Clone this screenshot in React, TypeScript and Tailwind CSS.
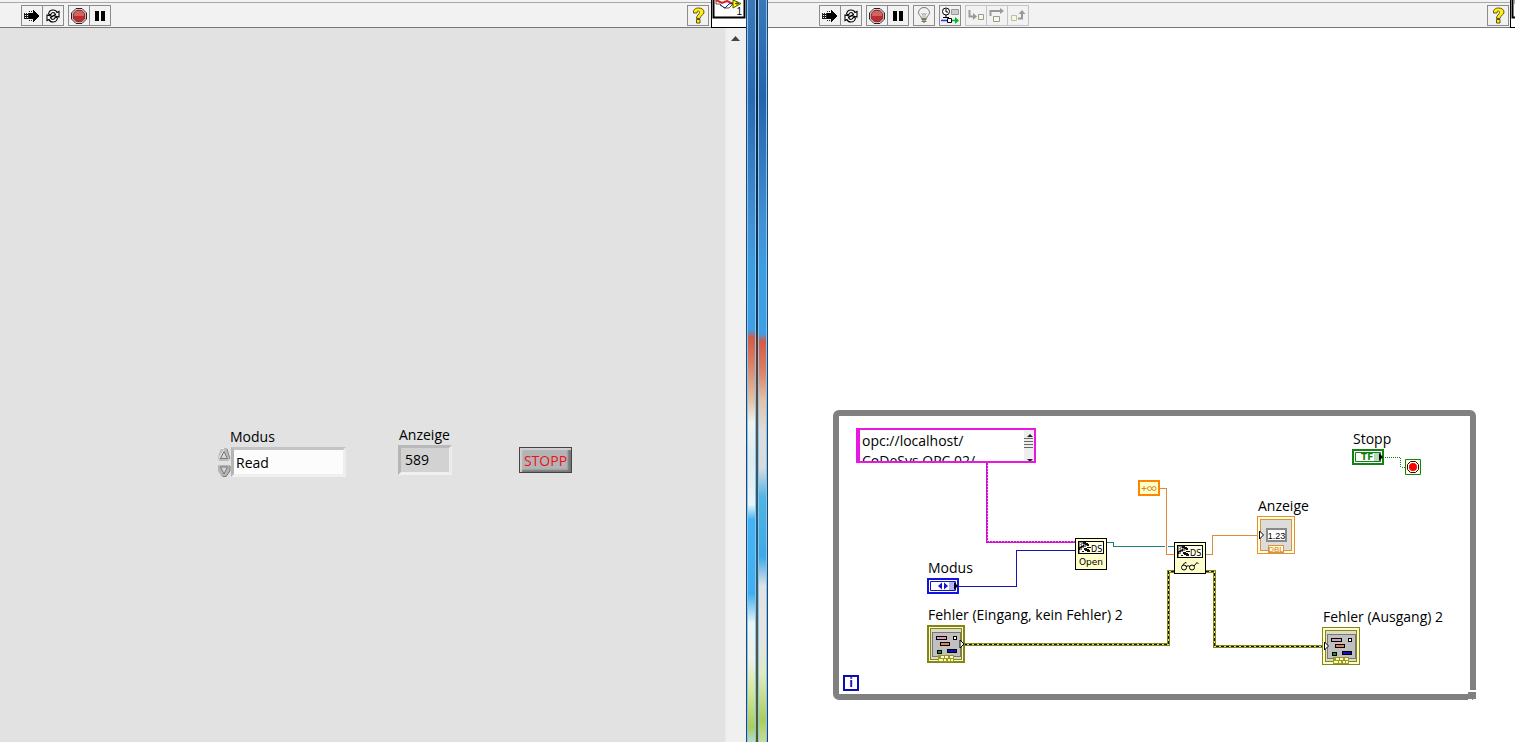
import { useState } from "react";
import type { ReactNode } from "react";

const labelClass = "text-[14px] leading-5 whitespace-nowrap text-black";

function ToolButton({
  title,
  disabled,
  className = "",
  children,
}: {
  title: string;
  disabled?: boolean;
  className?: string;
  children: ReactNode;
}) {
  return (
    <button
      type="button"
      aria-label={title}
      disabled={disabled}
      className={`flex h-[21px] w-[22px] shrink-0 items-center justify-center border bg-[#f2f2f2] ${
        disabled ? "border-[#c4c4c4]" : "border-[#8c8c8c]"
      } ${className}`}
    >
      {children}
    </button>
  );
}

function RunIcon() {
  return (
    <svg width="16" height="14" viewBox="0 0 16 14" shapeRendering="crispEdges">
      <path d="M5 4h4V1h1v1h1v1h1v1h1v1h1v1h1v2h-1v1h-1v1h-1v1h-1v1h-1v1H9v-3H5z" fill="#000" />
      <path d="M0 4h1v6H0zM2 4h1v6H2zM4 4h1v6H4zM5 2h1v1H5zM7 2h1v1H7zM5 11h1v1H5zM7 11h1v1H7z" fill="#222" />
      <path d="M1 5h1M1 7h1M1 9h1M3 5h1M3 7h1M3 9h1" stroke="#000" />
    </svg>
  );
}

function RunContinuousIcon() {
  return (
    <svg width="16" height="14" viewBox="0 0 16 14" fill="#fff" stroke="#000" strokeWidth="1.1">
      <path d="M3.500 5C4 2.500 5.500 1 8 1c2 0 3.500 1 4 2.500L14 2.500V8L8.500 6.500l2-1C10 4 9 3.500 8 3.500 6.500 3.500 6 4.500 5.500 6z" />
      <path d="M12.500 9c-.5 2.500-2 4-4.500 4-2 0-3.500-1-4-2.500L2 11.500V6l5.500 1.500-2 1c.5 1.500 1.500 2 2.500 2 1.500 0 2-1 2.500-2.500z" />
    </svg>
  );
}

function AbortIcon() {
  return (
    <svg width="16" height="16" viewBox="0 0 16 16">
      <path d="M5 .5h6L15.500 5v6L11 15.500H5L.5 11V5z" fill="#fff" stroke="#222" />
      <path d="M5.500 2h5L14 5.500v5L10.500 14h-5L2 10.500v-5z" fill="#b82f2f" stroke="#7d2020" strokeWidth=".7" />
      <path d="M5.500 3h5L13 5.500V8H3V5.500z" fill="#d06464" />
    </svg>
  );
}

function PauseIcon() {
  return (
    <svg width="10" height="10" viewBox="0 0 10 10" shapeRendering="crispEdges">
      <path d="M0 0h4v10H0zM6 0h4v10H6z" fill="#000" />
    </svg>
  );
}

function BulbIcon() {
  return (
    <svg width="14" height="17" viewBox="0 0 14 17" fill="none" stroke="#777">
      <path d="M4.500 11.500C4.500 9 1.500 8.500 1.500 5.500a5.500 5 0 0 1 11 0c0 3-3 3.500-3 6z" fill="#f2f2f0" />
      <path d="M4.500 6l1.200 2L7 6l1.300 2 1.200-2M6 8v3M8 8v3" stroke="#999" strokeWidth=".8" />
      <path d="M4.500 12.500h5M4.500 14.500h5" />
      <path d="M5 13.500h4M6 15.500h2" stroke="#b5a95c" />
    </svg>
  );
}

function RetainWireIcon() {
  return (
    <svg width="18" height="17" viewBox="0 0 18 17" fill="none">
      <circle cx="5" cy="4.500" r="3.500" fill="#fff" stroke="#000" />
      <path d="M5 2v3h2M5 8v3M2 10.500h6" stroke="#000" />
      <path d="M10.500 2.500h7v5h-7z" fill="#ccc" stroke="#999" />
      <path d="M0 13.500h6" stroke="#23f" strokeWidth="1.500" />
      <path d="M6.500 11.500h4v4h-4z" fill="#fff" stroke="#000" />
      <path d="M11 13.500h4" stroke="#0a3" strokeWidth="1.500" />
      <path d="M14 10l4 3.500-4 3.500z" fill="#0b2" />
    </svg>
  );
}

function StepIntoIcon() {
  return (
    <svg width="17" height="12" viewBox="0 0 17 12" fill="none" stroke="#999">
      <path d="M1.500 0v6.500H7" strokeWidth="2" />
      <path d="M5 3l4 3.500L5 10z" fill="#999" stroke="none" />
      <path d="M10.500 4.500h5v5h-5z" fill="#fafad8" />
    </svg>
  );
}

function StepOverIcon() {
  return (
    <svg width="16" height="15" viewBox="0 0 16 15" fill="none" stroke="#999">
      <path d="M1.500 8V3H12" strokeWidth="2" />
      <path d="M11 0l4 3-4 3z" fill="#999" stroke="none" />
      <path d="M4.500 8.500h6v5h-6z" fill="#fafad8" />
    </svg>
  );
}

function StepOutIcon() {
  return (
    <svg width="16" height="13" viewBox="0 0 16 13" fill="none" stroke="#999">
      <path d="M1.500 6.500h5v5h-5z" fill="#fafad0" stroke="#bbb" />
      <path d="M8 9.500h4V4" strokeWidth="2" />
      <path d="M8.500 5l3.500-4 3.500 4z" fill="#999" stroke="none" />
    </svg>
  );
}

function HelpIcon() {
  return (
    <svg width="13" height="17" viewBox="0 0 13 17">
      <path d="M1.500 6C1 2.500 3.500 1 6.500 1S12 2.300 12 5.200C12 8.200 8 8.500 8 11.500H4.500C4.500 8 7.500 7.500 7.500 5.500c0-1-.6-1.500-1.400-1.500S5 4.700 5 6z" fill="#ffee11" stroke="#5c5410" />
      <path d="M4.500 12.500H8V16H4.500z" fill="#ffee11" stroke="#5c5410" />
    </svg>
  );
}

// connector/icon cell at the right end of a toolbar, clipped by the window top
function ViIcon({ index, className }: { index?: string; className: string }) {
  return (
    <div className={`relative h-[28px] shrink-0 overflow-hidden border-b border-l border-black bg-white ${className}`}>
      <svg width="34" height="27" viewBox="0 0 34 27">
        <path d="M1.500 0v17.500h31V0" fill="#fff" stroke="#000" strokeWidth="2" />
        <path d="M4 0v4h4l4 4h5l4-4" fill="#fff" stroke="#555" />
        <path d="M4 0l6 3 5-2 6 3" fill="none" stroke="#d22" strokeWidth="2" />
        <path d="M8 5l5 3 4-4 4-1" fill="none" stroke="#228" />
        <path d="M21 0v8l8-4.500z" fill="#ff0" stroke="#550" />
        <path d="M23 3.500h4M25 1.500v4" stroke="#550" />
      </svg>
      {index && (
        <span className="absolute top-[6px] right-[4px] font-['Liberation_Sans',sans-serif] text-[10px] leading-3">
          {index}
        </span>
      )}
    </div>
  );
}

function FrontPanel() {
  const [mode, setMode] = useState("Read");

  return (
    <section className="flex min-w-0 flex-col bg-[#e2e2e2]">
      <header className="flex h-[28px] bg-[#f2f2f2]">
        <div className="mt-[2px] flex flex-1 border-t border-b border-t-[#a8a8a8] border-b-[#777] pt-[2px] pl-[21px]">
          <ToolButton title="Run"><RunIcon /></ToolButton>
          <ToolButton title="Run continuously" className="-ml-px"><RunContinuousIcon /></ToolButton>
          <ToolButton title="Abort" className="ml-1"><AbortIcon /></ToolButton>
          <ToolButton title="Pause" className="-ml-px"><PauseIcon /></ToolButton>
          <ToolButton title="Help" className="mr-[2px] ml-auto"><HelpIcon /></ToolButton>
        </div>
        <ViIcon index="1" className="w-[35px]" />
      </header>
      <div className="flex flex-1">
        <div className="relative flex-1 overflow-hidden">
          <label htmlFor="modus" className={`absolute top-[399px] left-[230px] ${labelClass}`}>
            Modus
          </label>
          <div className="absolute top-[419px] left-[217px] flex h-[30px]">
            <div className="flex w-[14px] flex-col justify-center">
              <button type="button" aria-label="Previous" onClick={() => setMode("Read")}>
                <svg width="14" height="13" viewBox="0 0 14 13">
                  <path d="M4 0h6l3 11-2 2H2L1 9z" fill="#bdbdbd" />
                  <path d="M4 .5h3M2 10L7 2" stroke="#eee" />
                  <path d="M10 1l3 10" stroke="#888" />
                  <path d="M7 3.500l3.500 7h-7z" fill="#d6d6d6" stroke="#777" />
                </svg>
              </button>
              <button type="button" aria-label="Next" className="mt-1" onClick={() => setMode("Write")}>
                <svg width="14" height="12" viewBox="0 0 14 12">
                  <path d="M1 0h12v6l-4 6H5L1 6z" fill="#b4b4b4" />
                  <path d="M13 1v5l-4 5.500H6" fill="none" stroke="#777" />
                  <path d="M3.500 2h7L7 9z" fill="#d6d6d6" stroke="#777" />
                </svg>
              </button>
            </div>
            <select
              id="modus"
              value={mode}
              onChange={(e) => setMode(e.target.value)}
              className="w-[115px] appearance-none border-3 border-t-[#c3c3c3] border-r-[#ededed] border-b-[#f0f0f0] border-l-[#b5b5b5] bg-[#fcfcfc] pt-[2px] pl-[2px] text-[14px] leading-5 text-black"
            >
              <option>Read</option>
              <option>Write</option>
            </select>
          </div>

          <label htmlFor="anzeige" className={`absolute top-[397px] left-[399px] ${labelClass}`}>
            Anzeige
          </label>
          <output
            id="anzeige"
            className="absolute top-[417px] left-[398px] h-[30px] w-[54px] border-3 border-t-[#b9b9b9] border-r-[#ececec] border-b-[#f0f0f0] border-l-[#b5b5b5] bg-[#d2d2d2] pl-1 text-[14px] leading-6 text-black"
          >
            589
          </output>

          <button
            type="button"
            className="absolute top-[419px] left-[519px] h-[26px] w-[53px] border border-[#444] bg-[#b4b4b4] pt-px text-[14px] leading-5 text-[#f01020] shadow-[inset_2px_2px_1px_#d0d0d0,inset_-3px_-2px_2px_#777]"
          >
            STOPP
          </button>
        </div>
        <div className="flex w-[21px] justify-center border-l border-[#e9e9e9] bg-[#f0f0f0] pt-2 pr-[2px]">
          <svg width="9" height="5" viewBox="0 0 9 5">
            <path d="M4.500 0L9 5H0z" fill="#444" />
          </svg>
        </div>
      </div>
    </section>
  );
}

// strip of desktop wallpaper seen through the two glass window frames
function DesktopGap() {
  return (
    <div className="flex border-x border-[#17497a]">
      <div className="flex-1 border-x border-[#8fc4e8] bg-[linear-gradient(#3c78b8_0%,#2869b2_13%,#4290d4_30%,#3c9ee2_36%,#3f9fe4_44.500%,#d65a45_45.500%,#dc8062_49%,#e3c3a8_54%,#eef3ee_57%,#dcebee_62%,#eaf5f7_68%,#43b4f5_70%,#3eaff2_80%,#eaf5f5_84%,#eef1e6_89%,#d5ea9c_93%,#a9cd5b_98%,#b5dcd0_100%)]" />
      <div className="w-[2px] bg-[linear-gradient(#06213c_0%,#123a5e_44%,#5a342c_46%,#54544e_56%,#1d5c80_72%,#4c5a58_85%,#4c5a22_100%)]" />
      <div className="flex-1 border-x border-[#8fc4e8] bg-[linear-gradient(#3c78b8_0%,#2463ac_13%,#4290d4_30%,#3c9ee2_36%,#3f9fe4_45%,#d65a45_46%,#dc8062_50%,#e0c3aa_54%,#dcdcdc_58%,#d8dcde_63%,#50b5e4_67%,#3da9e6_75%,#dfe3e4_79%,#e6e4e2_86%,#dfeac0_91%,#a9cd5b_97%,#c9dc9c_100%)]" />
    </div>
  );
}

function Wires() {
  return (
    <svg
      className="absolute inset-0"
      width="631"
      height="278"
      viewBox="839 416 631 278"
      fill="none"
      shapeRendering="crispEdges"
    >
      <path d="M987 463v79h88" stroke="#f0a0f0" strokeWidth="2" />
      <path d="M986.500 463v79.500h88.500" stroke="#d010d0" />
      <path d="M987.500 463v78.500h87.500" stroke="#d010d0" strokeDasharray="2 1" />
      <path d="M959 586.500h57.500v-36h59" stroke="#1414b8" />
      <path d="M1107 542.500h6.500v4H1165M1168 546.500h6" stroke="#1d8080" />
      <path d="M1160 488.500h6.500v66h8M1206 554.500h6.500v-19h45" stroke="#e08a35" />
      <path d="M964 644.500h204.500v-73h6M1206 571.500h8.500v75H1323" stroke="#84841c" strokeWidth="3" />
      <path d="M964 644.500h204.500v-73h6M1206 571.500h8.500v75H1323" stroke="#e8e850" />
      <path d="M964 644.500h204.500v-73h6M1206 571.500h8.500v75H1323" stroke="#111" strokeDasharray="3 2" />
      <path d="M1385 457.500h15.500v9.500h4" stroke="#108010" strokeDasharray="1 1" />
    </svg>
  );
}

function DataSocketGlyph() {
  return (
    <g shapeRendering="crispEdges">
      <path d="M.5.5h31v31H.5z" fill="#ffffcc" stroke="#000" />
      <path d="M3.500 3.500h25v12h-25z" fill="#ffffe8" stroke="#000" />
      <path d="M4 4h4v1h2v1h3v2h-2v1H9v1H7v2H5v3H4z" fill="#888" />
      <path d="M8 4h3v1h2v1h1v2h-2V7h-2V6H8zM4 9h2V8h2V7h1v2H7v1H5v2H4zM9 10h3v1h2v1h1v2h-3v-1h-2v-1H9zM12 9h4v1h-4zM7 13h2v1H7z" fill="#111" />
      <path d="M5 5h1v1H5zM5 7h1v1H5zM7 6h1v1H7zM5 13h1v1H5z" fill="#fff" />
      <text x="16" y="14" fontSize="8" fontFamily="DejaVu Sans, sans-serif" fill="#000">DS</text>
    </g>
  );
}

function ClusterTerminal({ input }: { input?: boolean }) {
  return (
    <svg width="38" height="38" viewBox="0 0 38 38" shapeRendering="crispEdges">
      <path d="M.5.5h37v37H.5z" fill="#ffffcc" stroke="#84841c" />
      {input && <path d="M1.500 1.500h35v35h-35z" fill="none" stroke="#84841c" />}
      <path d="M3.500 3.500h31v31h-31z" fill="#dcdcc4" stroke="#84841c" />
      <path d="M5.500 7.500h28v24h-28z" fill="#c0c0c0" stroke="#777" />
      <path d="M9.500 11.500h10v3h-10z" fill="#e09ac0" stroke="#000" />
      <path d="M26.500 11.500h3v3h-3z" fill="#fff" stroke="#000" />
      <path d="M13.500 17.500h9v3h-9z" fill="#e08058" stroke="#000" />
      <path d="M10.500 25.500h4v3h-4z" fill="#2a8a2a" stroke="#000" />
      <path d="M20.500 24.500h9v3h-9z" fill="#1010c0" stroke="#000" />
      <path d="M11 30h16v7H11z" fill="#9a9a20" />
      <path d="M12 34h4v2h-4zM14 31h3v2h-3zM18 31h3v2h-3zM23 31h3v2h-3zM17 34h2v2h-2zM21 34h2v2h-2zM24 34h2v2h-2z" fill="#ffffcc" />
      {input ? (
        <path d="M33 15v8l4-4z" fill="#fff" stroke="#000" shapeRendering="auto" />
      ) : (
        <path d="M2.500 15v8l4-4z" fill="#fff" stroke="#000" shapeRendering="auto" />
      )}
    </svg>
  );
}

function WhileLoop() {
  return (
    <div className="absolute top-[382px] left-[65px] h-[290px] w-[643px] rounded-md border-6 border-[#808080] bg-white">
      <Wires />

      <div className="absolute top-[12px] left-[17px] flex h-[35px] w-[180px] border-2 border-l-4 border-[#e818e0] bg-white">
        <textarea
          aria-label="URL"
          readOnly
          rows={2}
          defaultValue={"opc://localhost/\nCoDeSys.OPC.02/"}
          className="min-w-0 flex-1 resize-none overflow-hidden pt-px pl-[2px] text-[14px] leading-5 text-black outline-none"
        />
        <svg width="10" height="31" viewBox="0 0 10 31" className="shrink-0">
          <path d="M0 0h10v31H0z" fill="#eee" />
          <path d="M6 4l3 3H3zM3 29h6l-3 3z" fill="#222" />
          <path d="M0 8.500h9M0 11.500h9M0 14.500h9M0 17.500h9" stroke="#666" />
        </svg>
      </div>

      <span className={`absolute top-[13px] left-[514px] ${labelClass}`}>Stopp</span>
      <svg className="absolute top-[33px] left-[513px]" width="32" height="16" viewBox="0 0 32 16">
        <path d="M1 1h30v14H1z" fill="#fff" stroke="#128212" strokeWidth="2" />
        <path d="M3.500 3.500h25v9h-25z" fill="#fff" stroke="#128212" />
        <path d="M22 4h6v8h-6z" fill="#b8d8b8" />
        <path d="M27 4l4 4-4 4z" fill="#000" />
        <text x="9" y="11" fontSize="9" fontWeight="700" fontFamily="DejaVu Sans, sans-serif" fill="#128212">TF</text>
      </svg>
      <svg className="absolute top-[43px] left-[566px]" width="16" height="16" viewBox="0 0 16 16">
        <path d="M.5.5h15v15H.5z" fill="#ffffdc" stroke="#128212" />
        <path d="M5.500 2.500h5l3 3v5l-3 3h-5l-3-3v-5z" fill="#fff" stroke="#300" />
        <circle cx="8" cy="8" r="4" fill="#f00" />
      </svg>

      <svg className="absolute top-[64px] left-[299px]" width="22" height="16" viewBox="0 0 22 16">
        <path d="M1 1h20v14H1z" fill="#ffffcc" stroke="#ff8400" strokeWidth="2" />
        <path d="M3.500 8.500h5M6 6v5" stroke="#d8891c" />
        <circle cx="11.500" cy="8.500" r="2" fill="none" stroke="#d8891c" />
        <circle cx="16" cy="8.500" r="2" fill="none" stroke="#d8891c" />
      </svg>

      <svg className="absolute top-[122px] left-[236px]" width="32" height="32" viewBox="0 0 32 32">
        <DataSocketGlyph />
        <text x="16" y="27" textAnchor="middle" fontSize="9" fontFamily="DejaVu Sans, sans-serif">Open</text>
      </svg>
      <svg className="absolute top-[126px] left-[335px]" width="32" height="32" viewBox="0 0 32 32">
        <DataSocketGlyph />
        <g fill="none" stroke="#000">
          <circle cx="10" cy="25.500" r="2.500" />
          <circle cx="18" cy="25.500" r="2.500" />
          <path d="M12 24.500q2-1.500 4 0M8 24l3-3.500 1.500.5M20 24l3-3.500 1.500 1.500" />
        </g>
      </svg>

      <span className={`absolute top-[80px] left-[419px] ${labelClass}`}>Anzeige</span>
      <svg className="absolute top-[100px] left-[418px]" width="38" height="38" viewBox="0 0 38 38">
        <g shapeRendering="crispEdges">
          <path d="M.5.5h37v37H.5z" fill="#ffffdc" stroke="#e09038" />
          <path d="M3.500 3.500h31v31h-31z" fill="#dcdcdc" stroke="#e09038" />
          <path d="M10 13h19v12H10z" fill="#fff" stroke="#888" strokeWidth="2" />
          <path d="M11.500 29.500h15v7h-15z" fill="#ffffdc" stroke="#e09038" />
        </g>
        <path d="M2.500 15v8l4-4z" fill="#fff" stroke="#000" />
        <text x="19.500" y="22.500" textAnchor="middle" fontSize="9" fontFamily="Liberation Sans, sans-serif">1.23</text>
        <text x="19" y="36" textAnchor="middle" fontSize="8" fontFamily="Liberation Sans, sans-serif" fill="#d07818">DBL</text>
      </svg>

      <span className={`absolute top-[142px] left-[89px] ${labelClass}`}>Modus</span>
      <svg className="absolute top-[162px] left-[88px]" width="32" height="16" viewBox="0 0 32 16">
        <path d="M1 1h30v14H1z" fill="#fff" stroke="#1414e0" strokeWidth="2" />
        <path d="M3.500 3.500h25v9h-25z" fill="#fff" stroke="#1414c8" />
        <path d="M22 4h6v8h-6z" fill="#b4b4f0" />
        <path d="M15 4.500v7L11 8zM17 4.500v7L21 8z" fill="#1414c8" />
        <path d="M27 4l4 4-4 4z" fill="#000" />
      </svg>

      <span className={`absolute top-[189px] left-[89px] ${labelClass}`}>
        Fehler (Eingang, kein Fehler) 2
      </span>
      <div className="absolute top-[209px] left-[88px]">
        <ClusterTerminal input />
      </div>

      <span className={`absolute top-[191px] left-[484px] ${labelClass}`}>Fehler (Ausgang) 2</span>
      <div className="absolute top-[211px] left-[483px]">
        <ClusterTerminal />
      </div>

      <div className="absolute bottom-[3px] left-1 flex h-4 w-4 items-center justify-center border-2 border-[#0c0cb0] text-[12px] leading-3 font-bold text-[#0c0cb0]">
        i
      </div>

      {/* resize corner */}
      <svg className="absolute -right-[6px] -bottom-[6px]" width="8" height="10" viewBox="0 0 8 10" shapeRendering="crispEdges">
        <path d="M0 0h8v10H0z" fill="#fff" />
        <path d="M0 2h8v7H5v1H4V9H0z" fill="#808080" />
      </svg>
    </div>
  );
}

function BlockDiagram() {
  return (
    <section className="flex min-w-0 flex-col bg-white">
      <header className="flex h-[28px] bg-[#f2f2f2]">
        <div className="mt-[2px] flex flex-1 border-t border-b border-t-[#a8a8a8] border-b-[#777] pt-[2px] pl-[51px]">
          <ToolButton title="Run"><RunIcon /></ToolButton>
          <ToolButton title="Run continuously" className="-ml-px"><RunContinuousIcon /></ToolButton>
          <ToolButton title="Abort" className="ml-1"><AbortIcon /></ToolButton>
          <ToolButton title="Pause" className="-ml-px"><PauseIcon /></ToolButton>
          <ToolButton title="Highlight execution" className="ml-1"><BulbIcon /></ToolButton>
          <ToolButton title="Retain wire values" className="ml-1"><RetainWireIcon /></ToolButton>
          <ToolButton title="Step into" disabled className="ml-1"><StepIntoIcon /></ToolButton>
          <ToolButton title="Step over" disabled className="-ml-px"><StepOverIcon /></ToolButton>
          <ToolButton title="Step out" disabled className="-ml-px"><StepOutIcon /></ToolButton>
          <ToolButton title="Help" className="mr-px ml-auto"><HelpIcon /></ToolButton>
        </div>
        <ViIcon className="w-[5px]" />
      </header>
      <div className="relative flex-1 overflow-hidden">
        <WhileLoop />
      </div>
    </section>
  );
}

export default function App() {
  return (
    <main className="grid h-screen grid-cols-[746fr_22px_747fr] overflow-hidden font-['Open_Sans','Noto_Sans',sans-serif]">
      <FrontPanel />
      <DesktopGap />
      <BlockDiagram />
    </main>
  );
}
